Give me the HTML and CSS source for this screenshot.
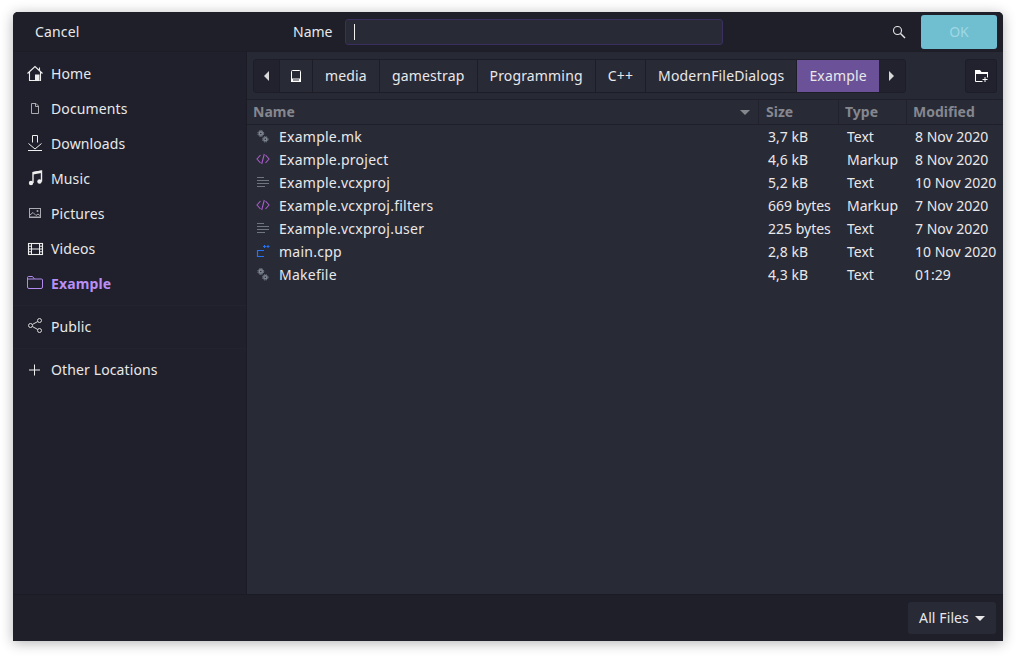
FILE: index.html
```html
<!DOCTYPE html>
<html>
<head>
    <title>Open File</title>
    <meta name="viewport" content="width=device-width, initial-scale=1" />
    <link rel="stylesheet" href="styles.css">
</head>
<body>
    <div class="window">
        <div class="header">
            <span class="cancel">Cancel</span>
            <span class="name-label">Name</span>
            <div class="name-input"><span class="caret"></span></div>
            <svg class="search" width="14" height="14" viewBox="0 0 14 14"><circle cx="5.5" cy="5.5" r="4" fill="none" stroke="#e6e6e6" stroke-width="1.1"/><path d="M8.5 8.500L13 13" stroke="#e6e6e6" stroke-width="1.4"/></svg>
            <div class="ok">OK</div>
        </div>
        <div class="middle">
            <div class="sidebar">
                <div class="place">
                    <svg class="ico" viewBox="0 0 18 17"><path d="M.5 8.500L8 1.500l7.500 7M2.500 7v8.500h4M13.500 7v8.500h-1M12.500 2.500v2.500M6.500 15.500h2" fill="none" stroke="#eee" stroke-width="1.100"/><path d="M8 9.500h4.500v6.500H8z" fill="#eee"/></svg>
                    <span>Home</span>
                </div>
                <div class="place">
                    <svg class="ico" viewBox="0 0 18 17"><path d="M4.500 3.500h4.500l2.500 2.500v7.500h-7zM8.500 3.500V6.500h3" fill="none" stroke="#a9abb0" stroke-width="1"/></svg>
                    <span>Documents</span>
                </div>
                <div class="place">
                    <svg class="ico" viewBox="0 0 18 17"><path d="M5.500 7.500V.5h5v7M1.500 8.500L8 14l6.500-5.500" fill="none" stroke="#eee" stroke-width="1"/><path d="M1 15.500h14" stroke="#eee" stroke-width="1.200"/></svg>
                    <span>Downloads</span>
                </div>
                <div class="place">
                    <svg class="ico" viewBox="0 0 18 17"><path d="M6 13V2.500l8.500-1.500v10.500" fill="none" stroke="#eee" stroke-width="1.400"/><path d="M6 2l8.500-1.500v2.500L6 4.500z" fill="#eee"/><circle cx="4" cy="13" r="2.200" fill="#eee"/><circle cx="12.500" cy="11.500" r="2.200" fill="#eee"/></svg>
                    <span>Music</span>
                </div>
                <div class="place">
                    <svg class="ico" viewBox="0 0 18 17"><rect x="2.500" y="3.500" width="11" height="9" fill="none" stroke="#a9abb0" stroke-width="1"/><path d="M3 10l3-2.500 3 3 2-1.500 2.500 2" fill="none" stroke="#a9abb0" stroke-width="1"/><rect x="2" y="11.500" width="12" height="1.500" fill="#a9abb0"/><circle cx="10.500" cy="6" r="1" fill="#a9abb0"/></svg>
                    <span>Pictures</span>
                </div>
                <div class="place">
                    <svg class="ico" viewBox="0 0 18 17"><rect x="1.500" y="3.500" width="14" height="11" fill="none" stroke="#eee" stroke-width="1.100"/><path d="M4.500 3.500v11M12.500 3.500v11M4.500 9h8M1.500 6.200h3M1.500 9h3M1.500 11.800h3M12.500 6.200h3M12.500 9h3M12.500 11.800h3" stroke="#eee" stroke-width="1"/></svg>
                    <span>Videos</span>
                </div>
                <div class="place current">
                    <svg class="ico" viewBox="0 0 18 17"><path d="M.5 12V2.500q0-1 1-1h4l2 2.500h7q1 0 1 1V12q0 1.500-1.500 1.500H2Q.5 13.500.5 12zM.5 4h7" fill="none" stroke="#b38bf0" stroke-width="1"/></svg>
                    <span>Example</span>
                </div>
                <div class="side-sep"></div>
                <div class="place">
                    <svg class="ico" viewBox="0 0 18 17"><circle cx="3.500" cy="7.500" r="2" fill="none" stroke="#d8d8d8" stroke-width="1"/><circle cx="12.500" cy="2.500" r="2" fill="none" stroke="#d8d8d8" stroke-width="1"/><circle cx="12.500" cy="12.500" r="2" fill="none" stroke="#d8d8d8" stroke-width="1"/><path d="M5.300 6.500l5.500-3M5.300 8.500l5.500 3" stroke="#d8d8d8" stroke-width="1"/></svg>
                    <span>Public</span>
                </div>
                <div class="side-sep"></div>
                <div class="place">
                    <svg class="ico" viewBox="0 0 18 17"><path d="M7.500 3.500v11M2 9h11" stroke="#eee" stroke-width="1"/></svg>
                    <span>Other Locations</span>
                </div>
            </div>
            <div class="main">
                <div class="toolbar">
                    <div class="path">
                        <div class="crumb arrow"><span class="tri-left"></span></div>
                        <div class="crumb disk">
                            <svg width="10" height="12" viewBox="0 0 10 12"><path d="M1.500.5h7q1 0 1 1v10H.5v-10q0-1 1-1z" fill="none" stroke="#fff" stroke-width="1"/><rect x="0" y="8.500" width="10" height="3.500" fill="#fff"/><rect x="2" y="9.500" width="6" height="1" fill="#282a36"/></svg>
                        </div>
                        <div class="crumb">media</div>
                        <div class="crumb">gamestrap</div>
                        <div class="crumb">Programming</div>
                        <div class="crumb">C++</div>
                        <div class="crumb">ModernFileDialogs</div>
                        <div class="crumb selected">Example</div>
                        <div class="crumb arrow last"><span class="tri-right"></span></div>
                    </div>
                    <div class="newdir">
                        <svg width="13" height="12" viewBox="0 0 13 12"><path d="M.5 3v8.500h7M12.500 3.500v4" fill="none" stroke="#fff" stroke-width="1"/><path d="M0 0h5l1.500 2H13v2H0z" fill="#fff"/><path d="M10 7v5M7.500 9.500h5" stroke="#fff" stroke-width="1"/></svg>
                    </div>
                </div>
                <div class="files">
                    <div class="row head">
                        <div class="c-name"><span>Name</span><span class="sort"></span></div>
                        <div class="c-size">Size</div>
                        <div class="c-type">Type</div>
                        <div class="c-mod">Modified</div>
                    </div>
                    <div class="row">
                        <div class="c-name"><svg class="fi" viewBox="0 0 14 13"><use href="#gears"/></svg><span>Example.mk</span></div>
                        <div class="c-size">3,7 kB</div><div class="c-type">Text</div><div class="c-mod">8 Nov 2020</div>
                    </div>
                    <div class="row">
                        <div class="c-name"><svg class="fi" viewBox="0 0 14 13"><use href="#markup"/></svg><span>Example.project</span></div>
                        <div class="c-size">4,6 kB</div><div class="c-type">Markup</div><div class="c-mod">8 Nov 2020</div>
                    </div>
                    <div class="row">
                        <div class="c-name"><svg class="fi" viewBox="0 0 14 13"><use href="#lines"/></svg><span>Example.vcxproj</span></div>
                        <div class="c-size">5,2 kB</div><div class="c-type">Text</div><div class="c-mod">10 Nov 2020</div>
                    </div>
                    <div class="row">
                        <div class="c-name"><svg class="fi" viewBox="0 0 14 13"><use href="#markup"/></svg><span>Example.vcxproj.filters</span></div>
                        <div class="c-size">669 bytes</div><div class="c-type">Markup</div><div class="c-mod">7 Nov 2020</div>
                    </div>
                    <div class="row">
                        <div class="c-name"><svg class="fi" viewBox="0 0 14 13"><use href="#lines"/></svg><span>Example.vcxproj.user</span></div>
                        <div class="c-size">225 bytes</div><div class="c-type">Text</div><div class="c-mod">7 Nov 2020</div>
                    </div>
                    <div class="row">
                        <div class="c-name"><svg class="fi" viewBox="0 0 14 13"><path d="M8 5.500H1.500v6H8" fill="none" stroke="#2472f5" stroke-width="1.200"/><path d="M7 1.500h3M8.500 0v3M10.500 1.500h3M12 0v3" stroke="#2472f5" stroke-width="1"/></svg><span>main.cpp</span></div>
                        <div class="c-size">2,8 kB</div><div class="c-type">Text</div><div class="c-mod">10 Nov 2020</div>
                    </div>
                    <div class="row">
                        <div class="c-name"><svg class="fi" viewBox="0 0 14 13"><use href="#gears"/></svg><span>Makefile</span></div>
                        <div class="c-size">4,3 kB</div><div class="c-type">Text</div><div class="c-mod">01:29</div>
                    </div>
                </div>
            </div>
        </div>
        <div class="footer">
            <div class="filter">All Files<span class="tri-down"></span></div>
        </div>
    </div>

    <svg width="0" height="0" class="defs">
        <defs>
            <g id="gears" fill="none" stroke="#7d8590">
                <circle cx="4.800" cy="3.500" r="1.600" stroke-width="1.600"/>
                <circle cx="4.800" cy="3.500" r="2.900" stroke-width="1" stroke-dasharray="1.500 .8"/>
                <circle cx="9.300" cy="9.300" r="1.500" stroke-width="1.500"/>
                <circle cx="9.300" cy="9.300" r="2.700" stroke-width="1" stroke-dasharray="1.400 .8"/>
            </g>
            <g id="markup" fill="none" stroke="#a85cc8" stroke-width="1.100">
                <path d="M4.500 2L1 6l3.500 4M9.500 2L13 6l-3.500 4M8.300 1L5.700 11"/>
            </g>
            <g id="lines" stroke="#6f7680" stroke-width="1">
                <path d="M1 1.500h7M1 4.500h12M1 7.500h12M1 10.500h8"/>
            </g>
        </defs>
    </svg>
</body>
</html>
```

FILE: styles.css
```css
html, body {
    height: 100%;
}

body {
    margin: 0;
    padding: 12px 13px 15px;
    box-sizing: border-box;
    background-color: #fff;
    font-family: "Noto Sans", "Open Sans", sans-serif;
    font-size: 14px;
    color: #e8e8ea;
    overflow: hidden;
}

.defs {
    display: block;
    height: 0;
}

.window {
    height: 629px;
    display: flex;
    flex-direction: column;
    background-color: #1e1f29;
    border-radius: 5px 5px 0 0;
    box-shadow: 0 2px 13px rgba(0, 0, 0, 0.3);
    overflow: hidden;
}

/* top bar */
.header {
    height: 40px;
    flex: none;
    display: flex;
    align-items: center;
    padding: 0 6px 0 22px;
    background-color: #1e1f29;
    border-bottom: 1px solid #1c1d26;
    box-sizing: border-box;
}

.cancel {
    width: 258px;
    flex: none;
    letter-spacing: 0.15px;
}

.name-label {
    width: 52px;
    flex: none;
}

.name-input {
    width: 378px;
    height: 26px;
    flex: none;
    box-sizing: border-box;
    display: flex;
    align-items: center;
    padding-left: 8px;
    background-color: #282a36;
    border: 1px solid #3a2f5e;
    border-radius: 3px;
}

.caret {
    width: 1px;
    height: 16px;
    background-color: #f0f0f0;
}

.search {
    margin-left: 169px;
    flex: none;
}

.ok {
    width: 76px;
    height: 34px;
    flex: none;
    margin-left: 15px;
    display: flex;
    align-items: center;
    justify-content: center;
    background-color: #6fbfd1;
    border-radius: 3px;
    color: #9fd8e4;
}

.middle {
    flex: 1;
    display: flex;
    min-height: 0;
}

/* left places list */
.sidebar {
    width: 234px;
    flex: none;
    box-sizing: border-box;
    padding-top: 4px;
    background-color: #1f202b;
    border-right: 1px solid #1a1b24;
    letter-spacing: 0.12px;
}

.place {
    height: 35px;
    display: flex;
    align-items: center;
    padding-left: 14px;
}

.ico {
    width: 18px;
    height: 17px;
    margin-right: 6px;
    flex: none;
}

.place.current {
    color: #b98ef5;
    font-weight: 700;
}

.side-sep {
    height: 1px;
    margin: 4px 0 3px;
    background-color: #22232e;
}

.main {
    flex: 1;
    min-width: 0;
    display: flex;
    flex-direction: column;
    background-color: #282a36;
}

/* path bar */
.toolbar {
    height: 48px;
    flex: none;
    display: flex;
    align-items: flex-start;
    justify-content: space-between;
    box-sizing: border-box;
    padding: 7px 6px 0;
    background-color: #272934;
    border-bottom: 1px solid #1e1f29;
}

.path {
    display: flex;
    height: 34px;
    box-sizing: border-box;
    background-color: #282a36;
    border: 1px solid #1c1d26;
    border-radius: 3px;
    letter-spacing: 0.16px;
}

.crumb {
    display: flex;
    align-items: center;
    justify-content: center;
    padding: 0 12px 2px;
    border-right: 1px solid #1c1d26;
}

.crumb.arrow {
    width: 26px;
    padding: 0;
    box-sizing: border-box;
    background-color: #21222d;
}

.crumb.arrow.last {
    border-right: none;
}

.crumb.disk {
    width: 33px;
    padding: 0;
    box-sizing: border-box;
}

.crumb.selected {
    background-color: #6b5298;
    border-right: none;
}

.tri-left {
    border-top: 5px solid transparent;
    border-bottom: 5px solid transparent;
    border-right: 5px solid #d8d8d8;
}

.tri-right {
    border-top: 5px solid transparent;
    border-bottom: 5px solid transparent;
    border-left: 5px solid #d8d8d8;
}

.newdir {
    width: 32px;
    height: 34px;
    box-sizing: border-box;
    display: flex;
    align-items: center;
    justify-content: center;
    background-color: #21222d;
    border: 1px solid #1c1d26;
    border-radius: 3px;
}

/* file list */
.files {
    flex: 1;
}

.row {
    display: grid;
    grid-template-columns: 512px 80px 68px 1fr;
    height: 23px;
    line-height: 23px;
    white-space: nowrap;
}

.row > div {
    min-width: 0;
}

.row > .c-size {
    padding-left: 9px;
}

.row > .c-type,
.row > .c-mod {
    padding-left: 8px;
}

.row .c-name {
    display: flex;
    align-items: center;
    padding-left: 9px;
    letter-spacing: 0.25px;
}

.fi {
    width: 14px;
    height: 13px;
    margin-right: 9px;
    flex: none;
}

.row.head {
    height: 25px;
    line-height: 23px;
    color: #85878f;
    font-weight: 700;
    border-bottom: 1px solid #1e1f29;
    box-sizing: border-box;
}

.row.head > div {
    border-right: 1px solid #21222d;
    letter-spacing: 0;
}

.row.head > .c-name {
    align-items: flex-start;
    padding-left: 6px;
    justify-content: space-between;
    padding-right: 8px;
}

.row.head > .c-size {
    padding-left: 7px;
}

.row.head > .c-type {
    padding-left: 6px;
}

.row.head > .c-mod {
    padding-left: 6px;
    border-right: none;
}

.sort {
    margin-top: 10px;
    border-left: 5px solid transparent;
    border-right: 5px solid transparent;
    border-top: 5px solid #85878f;
}

/* bottom bar */
.footer {
    height: 47px;
    flex: none;
    display: flex;
    justify-content: flex-end;
    align-items: flex-start;
    box-sizing: border-box;
    padding: 7px 7px 0 0;
    background-color: #1e1f29;
    border-top: 1px solid #1a1b24;
}

.filter {
    width: 88px;
    height: 32px;
    box-sizing: border-box;
    display: flex;
    align-items: center;
    justify-content: center;
    padding-bottom: 2px;
    background-color: #282a36;
    border-radius: 3px;
    letter-spacing: 0.1px;
}

.tri-down {
    margin: 2px 0 0 6px;
    border-left: 5px solid transparent;
    border-right: 5px solid transparent;
    border-top: 5px solid #e8e8ea;
}
```
